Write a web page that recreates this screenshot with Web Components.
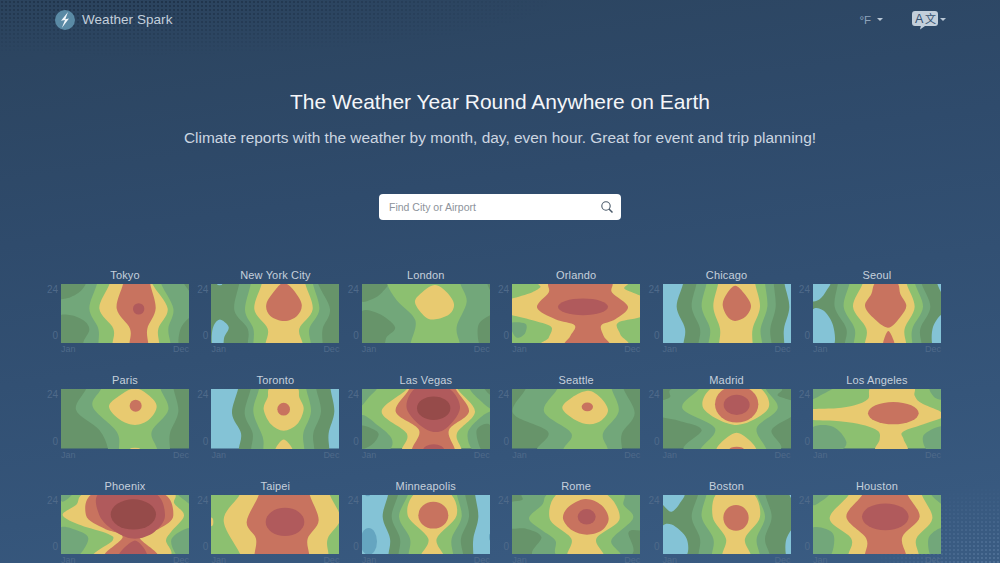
<!DOCTYPE html>
<html lang="en"><head><meta charset="utf-8"><title>Weather Spark</title>
<style>html,body{margin:0;padding:0;height:563px;overflow:hidden;background:#2f4b6c}</style></head>
<body>
<ws-page>
  <ws-header slot="header"></ws-header>
  <ws-hero slot="hero" heading="The Weather Year Round Anywhere on Earth" sub="Climate reports with the weather by month, day, even hour. Great for event and trip planning!"></ws-hero>
  <ws-search slot="search" placeholder="Find City or Airport"></ws-search>
  <ws-grid slot="grid"></ws-grid>
</ws-page>
<script>
const COL={d:'#67946a',m:'#72a77a',l:'#8cc070',y:'#e8ca70',r:'#c8735f',R:'#b05a5c',K:'#964b4a',b:'#84c3d6',B:'#65a5c0'};
const CITIES=[
['Tokyo','m',[['d','-10,-10 70,-10 60,20 20,42 -10,40'],['d','-10,102 30,93 70,110 85,135 70,165 55,190 -10,190'],['d','365,-10 395,-10 395,30'],['d','395,100 360,130 355,185 395,185'],['l','109,-5 85,73 112,133 112,182|299,-5 337,73 322,133 329,182'],['y','147,-5 115,73 157,133 154,182|272,-5 320,73 292,133 295,182'],['r','187,-5 167,73 207,133 205,182|267,-5 284,73 259,133 262,182'],['R',233,74,17,17]]],
['New York City','d',[['b',26,0,8,4],['b','25,106 53,128 40,158 34,185 5,185 5,133'],['m','85,-5 70,78 110,133 110,182|320,-5 357,75 335,133 335,182'],['l','120,-5 102,78 127,133 127,182|305,-5 325,75 295,133 300,182'],['y','153,-5 130,75 170,133 163,182|282,-5 305,75 265,133 276,182'],['r','218,-3 195,15 166,60 178,95 220,110 258,95 272,60 245,15'],['r',218,180,6,3]]],
['London','m',[['d','-5,-5 75,-5 60,25 30,45 -5,50'],['d','-5,86 49,88 99,128 74,158 60,185 -5,185'],['d','375,-5 395,-5 395,35'],['d','349,123 384,93 395,95 395,185 355,185'],['l','74,-5 104,48 160,108 145,182|294,-5 314,53 284,128 294,182'],['y','219,3 180,25 159,55 190,98 220,105 262,90 276,60 255,25']]],
['Orlando','l',[['m','-5,117 40,118 40,145 20,160 5,150'],['y','98,-8 85,10 60,25 0,43 -15,43 -15,93 0,93 70,110 118,128 110,160 98,185 335,185 325,150 318,115 395,93 395,43 338,15 333,-8'],['r','123,-8 110,25 75,70 130,105 188,123 175,155 163,185 288,185 275,155 268,123 310,105 348,68 300,25 288,-8'],['R',213,68,75,25]]],
['Chicago','b',[['d','61,-5 41,68 66,133 61,182|364,-5 379,68 363,133 364,182'],['m','101,-5 86,68 111,133 106,182|332,-5 338,68 322,133 326,182'],['l','131,-5 116,68 141,133 136,182|306,-5 313,68 293,133 298,182'],['y','166,-5 151,68 171,133 168,182|276,-5 291,68 269,133 269,182'],['r','217,5 192,28 179,60 192,95 216,110 248,97 264,65 245,30']]],
['Seoul','d',[['b','-5,-5 50,-5 40,20 20,45 -5,48'],['b','-5,83 30,78 60,123 60,185 -5,185'],['b','372,-5 395,-5 395,40'],['b','390,93 360,128 360,185 395,185'],['m','75,-5 65,68 100,133 95,182|325,-5 352,68 322,133 326,182'],['l','110,-5 92,68 125,133 122,182|305,-5 330,68 298,133 298,182'],['y','150,-5 120,68 160,133 155,182|280,-5 305,68 275,133 280,182'],['r','190,-5 175,30 156,65 180,100 225,130 262,98 280,65 262,30 250,-5'],['r','226,140 210,185 245,185']]],
['Paris','d',[['m','77,-5 45,62 115,122 142,182|337,-5 352,67 327,132 327,182'],['l','122,-5 95,52 167,127 174,182|297,-5 322,62 272,127 289,182'],['y','222,-2 175,20 144,52 175,90 222,107 265,90 287,52 265,20'],['r',224,50,18,18],['y',222,180,16,5]]],
['Toronto','b',[['d','82,-5 63,72 90,132 83,182|358,-5 370,67 353,132 355,182'],['m','120,-5 101,72 125,132 120,182|315,-5 330,67 307,132 310,182'],['l','145,-5 127,67 155,142 157,182|285,-5 300,67 277,132 280,182'],['y','180,-5 170,25 158,60 180,105 218,124 258,105 278,60 265,25 255,-5'],['r',218,60,19,19],['y','218,150 193,185 245,185']]],
['Las Vegas','l',[['m','-5,-5 45,-5 20,25 -5,50'],['m','-5,80 50,110 90,150 75,185 -5,185'],['d','-5,112 30,118 50,135 30,165 -5,175'],['m','325,-5 395,-5 395,60 350,30'],['d','365,-5 395,-5 395,25'],['m','395,67 320,122 335,185 395,185'],['d','344,122 384,107 395,185 360,185'],['y','139,-5 59,67 134,132 119,182|284,-5 339,67 285,132 299,182'],['r','144,-5 101,67 171,122 149,182|279,-5 321,67 261,122 279,182'],['R','165,-5 134,57 189,118 245,122 294,57 255,-5'],['K',215,57,50,35],['R',215,182,32,18]]],
['Seattle','d',[['m','43,-5 3,72 108,127 73,182|333,-5 368,72 330,132 330,182'],['l','138,-5 96,67 178,132 153,182|298,-5 320,67 273,132 288,182'],['y','228,5 180,25 151,57 190,92 233,105 270,92 288,62 265,25'],['r',226,53,17,13]]],
['Madrid','d',[['m','50,-5 20,25 -10,40 -10,80 50,95 116,122 71,185 341,185 326,122 395,75 395,40 345,20 335,-5'],['l','111,-5 58,57 156,117 111,182|306,-5 344,57 281,117 311,182'],['y','156,-8 121,57 221,107 316,57 281,-8'],['r',221,45,65,55],['R',221,47,39,30],['y','221,130 161,185 279,185'],['r',221,180,22,8]]],
['Los Angeles','l',[['m','-5,-5 60,-5 30,15 -5,30'],['m','-5,117 60,112 100,157 75,185 -5,185'],['m','350,-5 395,-5 395,30 365,25'],['m','395,112 332,137 345,185 395,185'],['y','180,-8 165,30 125,48 70,57 -12,62 -12,90 80,96 150,107 195,125 200,150 190,185 280,185 272,150 270,127 340,102 395,77 325,42 305,20 295,-8'],['r',241,72,76,33]]],
['Phoenix','l',[['m','-5,-5 35,-5 5,20'],['m','350,-5 395,-5 395,30 370,15'],['m','-5,100 47,105 82,130 47,185 -5,185'],['m','395,100 332,130 352,185 395,185'],['y','87,-8 45,30 5,60 60,90 140,115 155,135 102,185 317,185 315,135 330,110 369,62 340,25 322,-8'],['r','105,-8 75,60 130,100 185,125 132,185 289,185 235,125 295,100 337,60 297,-8'],['R','120,-8 115,60 165,110 222,130 280,110 312,60 275,-8'],['R','222,135 172,185 257,185'],['K',217,58,68,45]]],
['Taipei','l',[['y','88,-5 38,75 90,182|355,-5 388,70 350,130 353,182'],['y',0,80,7,13],['r','145,-5 107,80 135,130 130,182|295,-5 323,75 290,130 295,182'],['R',222,80,58,42]]],
['Minneapolis','b',[['B',20,138,25,40],['B',17,0,7,4],['B',384,125,3,10],['d','79,-5 62,65 84,130 79,182|339,-5 349,65 334,130 334,182'],['m','109,-5 89,65 114,130 109,182|309,-5 321,65 297,130 304,182'],['l','139,-5 111,65 144,130 139,182|284,-5 299,65 269,130 274,182'],['y','164,-8 137,60 199,130 177,185 244,185 224,130 284,60 259,-8'],['r',214,60,45,40]]],
['Rome','d',[['m','60,-8 30,15 -12,28 -12,95 40,100 88,125 75,185 345,185 350,110 395,100 395,30 368,-8'],['l','125,-8 90,30 51,70 90,105 130,135 145,185 320,185 298,135 363,70 335,30 320,-8'],['y','143,-8 113,70 178,130 170,185 273,185 253,130 323,70 273,-8'],['r','220,12 170,35 153,70 180,105 225,118 270,105 290,70 268,30'],['R',224,65,27,23]]],
['Boston','d',[['b','-5,-5 62,-5 50,25 26,50 5,35 -5,20'],['b','-5,100 26,88 71,130 66,185 -5,185'],['b','378,-5 395,-5 395,25'],['b','390,105 369,135 371,185 395,185'],['m','106,-5 86,65 111,130 106,182|306,-5 326,65 306,130 321,182'],['l','131,-5 116,65 151,130 146,182|281,-5 306,65 281,130 291,182'],['y','166,-8 149,65 189,130 181,185 261,185 246,130 291,65 266,-8'],['r',219,68,38,38]]],
['Houston','l',[['m','-5,-5 50,-5 15,25 -5,28'],['m','355,-5 395,-5 395,30 370,15'],['m','-5,100 60,115 50,185 -5,185'],['m','395,100 348,125 355,185 395,185'],['y','110,-5 50,70 115,130 105,182|325,-5 358,70 310,130 318,182'],['r','150,-5 100,65 160,130 155,182|282,-5 320,65 268,125 280,182'],['R',217,65,70,40]]]
];
const pts=s=>s.trim().split(/\s+/).map(p=>p.split(',').map(Number));
function smooth(P){const n=P.length,f=v=>+v.toFixed(1);let d=`M${P[0][0]} ${P[0][1]}`;
  for(let i=0;i<n;i++){const a=P[(i-1+n)%n],b=P[i],c=P[(i+1)%n],e=P[(i+2)%n];
    d+=`C${f(b[0]+(c[0]-a[0])/6)} ${f(b[1]+(c[1]-a[1])/6)} ${f(c[0]-(e[0]-b[0])/6)} ${f(c[1]-(e[1]-b[1])/6)} ${c[0]} ${c[1]}`;}
  return d+'Z';}
function shape(l){
  if(l.length>2)return `<ellipse cx="${l[1]}" cy="${l[2]}" rx="${l[3]}" ry="${l[4]}" fill="${COL[l[0]]}"/>`;
  let P;
  if(l[1].includes('|')){const [a,b]=l[1].split('|').map(pts);
    P=[[a[0][0],-60],...a,[a[a.length-1][0],240],[b[b.length-1][0],240],...b.slice().reverse(),[b[0][0],-60]];
  } else P=pts(l[1]);
  return `<path d="${smooth(P)}" fill="${COL[l[0]]}"/>`;
}
class WsPage extends HTMLElement{constructor(){super();this.attachShadow({mode:'open'}).innerHTML=`<style>
:host{display:flex;flex-direction:column;position:relative;height:563px;overflow:hidden;background:linear-gradient(172deg,#2b435d 0%,#2f4b6c 35%,#35557a 75%,#3a5c83 100%);font-family:"Liberation Sans",Arial,sans-serif}
:host::before,:host::after{content:"";position:absolute;inset:0;pointer-events:none}
:host::before{background-image:radial-gradient(circle,rgba(15,28,45,.4) .7px,transparent 1px);background-size:4px 4px;-webkit-mask-image:radial-gradient(ellipse 420px 55px at 130px 0,#000 10%,transparent 100%);mask-image:radial-gradient(ellipse 420px 55px at 130px 0,#000 10%,transparent 100%)}
:host::after{background-image:radial-gradient(circle,rgba(150,180,215,.22) .7px,transparent 1px);background-size:4px 4px;-webkit-mask-image:radial-gradient(ellipse 130px 80px at 1000px 563px,#000 10%,transparent 100%);mask-image:radial-gradient(ellipse 130px 80px at 1000px 563px,#000 10%,transparent 100%)}
::slotted(*){flex:none}
</style><slot name="header"></slot><slot name="hero"></slot><slot name="search"></slot><slot name="grid"></slot>`}}
class WsHeader extends HTMLElement{constructor(){super();this.attachShadow({mode:'open'}).innerHTML=`<style>
:host{display:flex;align-items:center;height:39px;padding:0 54px 0 55px;color:#c3cfdb;position:relative;z-index:1}
.brand{display:flex;align-items:center;gap:7px;font-size:13.5px;letter-spacing:.05px}
.sp{flex:1}.unit{display:flex;align-items:center;gap:6px;font-size:11.5px;color:#8ea3ba;margin-right:29px}
.caret{width:0;height:0;border:3px solid transparent;border-top:3.5px solid #bac8d6;border-bottom:0}
.lang{display:flex;align-items:center;gap:2px}svg{display:block}.lang svg{margin-top:2px}
</style><div class="brand"><svg width="20" height="20" viewBox="0 0 20 20"><circle cx="10" cy="10" r="10" fill="#5a8aa5"/><path d="M13 2 6 10.800 10 10 6.800 18 14 8.500 10.300 9.200Z" fill="#f1f6fa"/></svg><span>Weather Spark</span></div><div class="sp"></div>
<div class="unit"><span>°F</span><i class="caret"></i></div>
<div class="lang"><svg width="26" height="19" viewBox="0 0 26 19"><path d="M3 0H23a3 3 0 0 1 3 3V12a3 3 0 0 1-3 3H13L8 18.500 8.800 15H3a3 3 0 0 1-3-3V3a3 3 0 0 1 3-3Z" fill="#c3cfdb"/><text x="3" y="12" font-size="12.500" fill="#33506f" font-family="Liberation Sans">A</text><text x="13" y="12" font-size="11" fill="#33506f" font-family="Noto Sans CJK SC">文</text></svg><i class="caret"></i></div>`}}
class WsHero extends HTMLElement{constructor(){super();const r=this.attachShadow({mode:'open'});r.innerHTML=`<style>
:host{display:block;text-align:center;padding-top:49px;position:relative;z-index:1}
h1{margin:0;font-weight:400;font-size:21px;line-height:28px;color:#f4f6f9}
p{margin:12px 0 0;font-size:15.450px;line-height:20px;color:#ccd6e1}
</style><h1></h1><p></p>`;r.querySelector('h1').textContent=this.getAttribute('heading');r.querySelector('p').textContent=this.getAttribute('sub')}}
class WsSearch extends HTMLElement{constructor(){super();const r=this.attachShadow({mode:'open'});r.innerHTML=`<style>
:host{display:flex;align-self:center;align-items:center;justify-content:space-between;box-sizing:border-box;width:242px;height:26px;margin-top:46px;padding:0 8px 0 10px;background:#fff;border-radius:4px;position:relative;z-index:1}
span{font-size:10.500px;color:#8d939b}</style><span></span><svg width="12" height="12" viewBox="0 0 12 12" fill="none" stroke="#4a5a6a" stroke-width="1.100"><circle cx="5" cy="5" r="4.200"/><path d="M8 8l3.500 3.500" stroke-width="1.500"/></svg>`;r.querySelector('span').textContent=this.getAttribute('placeholder')}}
class WsCity extends HTMLElement{constructor(){super();this.attachShadow({mode:'open'})}
 set data(c){this.shadowRoot.innerHTML=`<style>
:host{display:grid;grid-template-columns:13px 128px;grid-template-rows:16px 59.500px 14px;color:#4f6a8a;font-size:9px}
.t{grid-column:2;text-align:center;font-size:11px;line-height:15px;color:#c6d0dc;white-space:nowrap;letter-spacing:.15px}
.a{grid-column:1;grid-row:2;display:flex;flex-direction:column;justify-content:space-between;align-items:flex-end;padding:0 3px 1px 0;line-height:11px;font-size:10px;height:59.500px;box-sizing:border-box}
svg{grid-column:2;grid-row:2;display:block;width:128px;height:59.500px}
.x{grid-column:2;grid-row:3;display:flex;justify-content:space-between;line-height:13px;font-size:9px}
.a span:last-child{margin-bottom:1px}
</style><div class="t">${c[0]}</div><div class="a"><span>24</span><span>0</span></div>
<svg viewBox="0 0 384 177" preserveAspectRatio="none"><rect width="384" height="177" fill="${COL[c[1]]}"/>${c[2].map(shape).join('')}</svg>
<div class="x"><span>Jan</span><span>Dec</span></div>`}}
class WsGrid extends HTMLElement{constructor(){super();const r=this.attachShadow({mode:'open'});r.innerHTML=`<style>
:host{display:grid;grid-template-columns:repeat(6,141px);column-gap:9.400px;row-gap:16px;margin:47.500px 0 0 48px;position:relative;z-index:1}</style>`;
 CITIES.forEach(c=>{const e=document.createElement('ws-city');r.appendChild(e);e.data=c})}}
customElements.define('ws-page',WsPage);customElements.define('ws-header',WsHeader);customElements.define('ws-hero',WsHero);customElements.define('ws-search',WsSearch);customElements.define('ws-city',WsCity);customElements.define('ws-grid',WsGrid);
</script></body></html>
